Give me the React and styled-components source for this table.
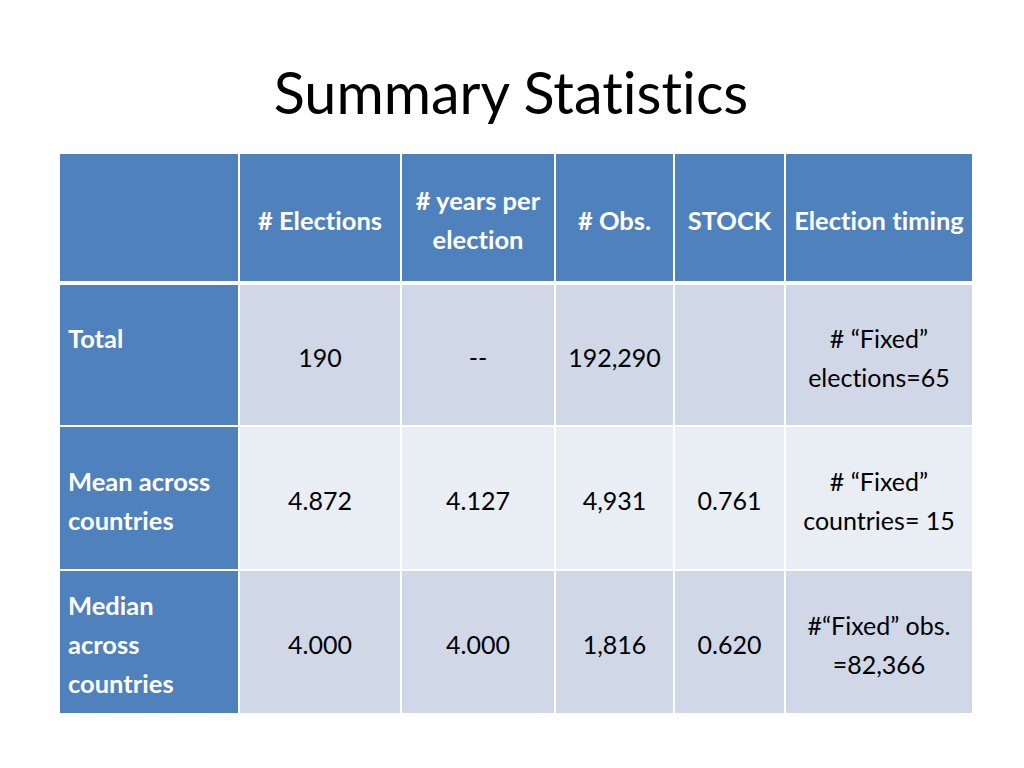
import React from 'react';
import styled, { createGlobalStyle } from 'styled-components';

const GlobalStyle = createGlobalStyle`
  html, body {
    margin: 0;
    padding: 0;
    background: #fff;
  }
  body {
    font-family: Lato, "Open Sans", sans-serif;
    font-variant-ligatures: none;
  }
`;

const Slide = styled.div`
  width: 1024px;
  height: 768px;
  background: #fff;
  display: flex;
  flex-direction: column;
  align-items: center;
`;

const Title = styled.h1`
  margin: 62px 0 0;
  height: 92px;
  font-weight: normal;
  font-size: 57.5px;
  line-height: 60px;
  color: #000;
  margin-left: -2px;
`;

const Table = styled.div`
  display: grid;
  grid-template-columns: 178px 160px 152px 117px 109px 186px;
  grid-template-rows: 129px 140px 142px 142px;
  column-gap: 2px;
  row-gap: 2px;
  margin-left: 8px;
`;

const colors = {
  head: '#4f81bd',
  side: '#4f81bd',
  odd: '#d0d8e8',
  even: '#e9edf4',
};

const Cell = styled.div`
  background: ${(p) => colors[p.$kind]};
  color: ${(p) => (p.$kind === 'head' || p.$kind === 'side' ? '#fff' : '#000')};
  font-weight: ${(p) => (p.$kind === 'head' || p.$kind === 'side' ? 700 : 400)};
  font-size: ${(p) => (p.$kind === 'head' || p.$kind === 'side' ? '25.5px' : '25px')};
  line-height: 39px;
  display: flex;
  align-items: center;
  justify-content: ${(p) => (p.$kind === 'side' ? 'flex-start' : 'center')};
  text-align: ${(p) => (p.$kind === 'side' ? 'left' : 'center')};
  padding: 5px ${(p) => (p.$kind === 'side' ? '8px' : '2px')} 0;
  margin-bottom: ${(p) => (p.$kind === 'head' ? '2px' : '0')};
  white-space: nowrap;
`;

const header = ['', '# Elections', ['# years per', 'election'], '# Obs.', 'STOCK', 'Election timing'];

const rows = [
  {
    kind: 'odd',
    label: ['Total', '\u00a0'],
    values: ['190', '--', '192,290', '', ['#  \u201cFixed\u201d', 'elections=65']],
  },
  {
    kind: 'even',
    label: ['Mean across', 'countries'],
    values: ['4.872', '4.127', '4,931', '0.761', ['# \u201cFixed\u201d', 'countries= 15']],
  },
  {
    kind: 'odd',
    label: ['Median', 'across', 'countries'],
    values: ['4.000', '4.000', '1,816', '0.620', ['#\u201cFixed\u201d obs.', '=82,366']],
  },
];

function Lines({ text }) {
  if (!Array.isArray(text)) return text;
  return (
    <div>
      {text.map((line, i) => (
        <div key={i}>{line}</div>
      ))}
    </div>
  );
}

export default function App() {
  return (
    <>
      <GlobalStyle />
      <Slide>
        <Title>Summary Statistics</Title>
        <Table>
          {header.map((h, i) => (
            <Cell key={`h${i}`} $kind="head">
              <Lines text={h} />
            </Cell>
          ))}
          {rows.map((row, r) => (
            <React.Fragment key={r}>
              <Cell $kind="side">
                <Lines text={row.label} />
              </Cell>
              {row.values.map((v, i) => (
                <Cell key={i} $kind={row.kind}>
                  <Lines text={v} />
                </Cell>
              ))}
            </React.Fragment>
          ))}
        </Table>
      </Slide>
    </>
  );
}
